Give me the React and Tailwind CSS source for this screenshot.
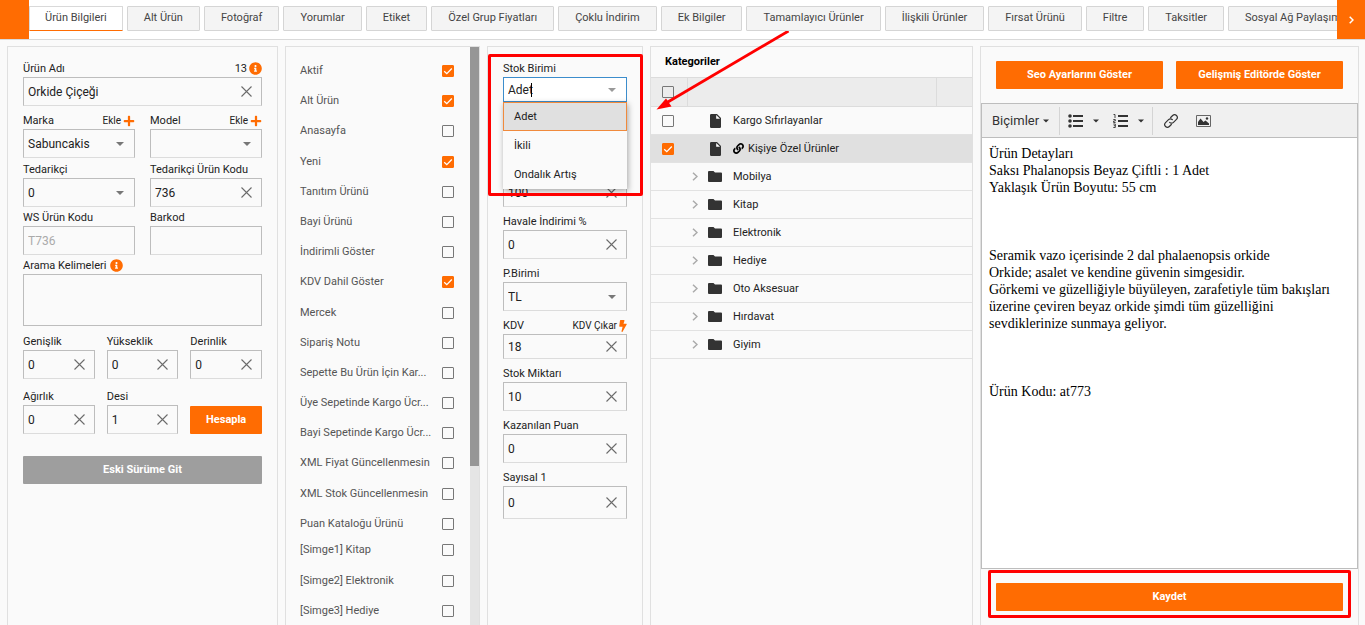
import { FaInfoCircle, FaPlus, FaLink, FaBolt } from "react-icons/fa";

const tabs = [
  "Ürün Bilgileri",
  "Alt Ürün",
  "Fotoğraf",
  "Yorumlar",
  "Etiket",
  "Özel Grup Fiyatları",
  "Çoklu İndirim",
  "Ek Bilgiler",
  "Tamamlayıcı Ürünler",
  "İlişkili Ürünler",
  "Fırsat Ürünü",
  "Filtre",
  "Taksitler",
  "Sosyal Ağ Paylaşım",
];

const productFlags = [
  { label: "Aktif", checked: true },
  { label: "Alt Ürün", checked: true },
  { label: "Anasayfa" },
  { label: "Yeni", checked: true },
  { label: "Tanıtım Ürünü" },
  { label: "Bayi Ürünü" },
  { label: "İndirimli Göster" },
  { label: "KDV Dahil Göster", checked: true },
  { label: "Mercek" },
  { label: "Sipariş Notu" },
  { label: "Sepette Bu Ürün İçin Kar..." },
  { label: "Üye Sepetinde Kargo Ücr..." },
  { label: "Bayi Sepetinde Kargo Ücr..." },
  { label: "XML Fiyat Güncellenmesin" },
  { label: "XML Stok Güncellenmesin" },
  { label: "Puan Kataloğu Ürünü" },
];

const iconFlags = [
  { label: "[Simge1] Kitap" },
  { label: "[Simge2] Elektronik" },
  { label: "[Simge3] Hediye" },
];

const categories = [
  { name: "Kargo Sıfırlayanlar", type: "file" },
  { name: "Kişiye Özel Ürünler", type: "file", checked: true, linked: true },
  { name: "Mobilya", type: "folder" },
  { name: "Kitap", type: "folder" },
  { name: "Elektronik", type: "folder" },
  { name: "Hediye", type: "folder" },
  { name: "Oto Aksesuar", type: "folder" },
  { name: "Hırdavat", type: "folder" },
  { name: "Giyim", type: "folder" },
];

const stockUnits = ["Adet", "İkili", "Ondalık Artış"];

function ClearIcon() {
  return (
    <svg width="11" height="11" viewBox="0 0 11 11" fill="none" stroke="#6b6b6b" strokeWidth="1.1">
      <path d="M0.5 0.5l10 10M10.5 0.5l-10 10" />
    </svg>
  );
}

function Caret({ className }) {
  return (
    <svg width="8" height="4" viewBox="0 0 8 4" className={className}>
      <path d="M0 0h8L4 4z" fill="currentColor" />
    </svg>
  );
}

function Checkbox({ id, checked, label }) {
  return (
    <span className="relative block size-3 shrink-0">
      <input
        id={id}
        type="checkbox"
        defaultChecked={checked}
        aria-label={label}
        className="peer block size-3 appearance-none rounded-[1px] border border-[#777] checked:border-[#ff6c02] checked:bg-[#ff6c02]"
      />
      <svg
        viewBox="0 0 12 12"
        className="pointer-events-none absolute inset-0 hidden size-3 peer-checked:block"
        fill="none"
        stroke="#fff"
        strokeWidth="1.3"
      >
        <path d="M2.2 6.2l2.6 2.5 5-5.2" />
      </svg>
    </span>
  );
}

// label row + control
function Field({ id, label, action, children, className = "" }) {
  return (
    <div className={className}>
      <div className="flex h-[17px] items-center justify-between text-[11px] leading-4 text-[#222]">
        <label htmlFor={id} className="whitespace-nowrap">{label}</label>
        {action}
      </div>
      {children}
    </div>
  );
}

function TextBox({ id, value, clearable = true, disabled, height = "h-[29px]", label }) {
  return (
    <div className={`relative ${height}`}>
      <input
        id={id}
        type="text"
        defaultValue={value}
        disabled={disabled}
        aria-label={label}
        className="block h-full w-full border border-[#bdbdbd] border-b-[#dcdcdc] bg-transparent pl-1 text-xs text-[#222] outline-none disabled:text-[#aaa]"
      />
      {clearable && (
        <button type="button" aria-label="Temizle" className="absolute inset-y-0 right-0 flex w-[31px] items-center justify-center">
          <ClearIcon />
        </button>
      )}
    </div>
  );
}

function SelectBox({ id, value }) {
  return (
    <div className="relative h-[29px]">
      <select
        id={id}
        defaultValue={value}
        className="block h-full w-full appearance-none border border-[#bdbdbd] border-b-[#dcdcdc] bg-transparent pl-1 text-xs text-[#222] outline-none"
      >
        <option value={value}>{value}</option>
      </select>
      <div className="pointer-events-none absolute inset-y-0 right-0 flex w-[31px] items-center justify-center text-[#777]">
        <Caret />
      </div>
    </div>
  );
}

function AddLink() {
  return (
    <a href="#ekle" className="flex items-center gap-0.5 text-[10px]">
      Ekle
      <FaPlus className="size-3 text-[#ff6c02]" />
    </a>
  );
}

function OrangeButton({ children, className = "" }) {
  return (
    <button type="button" className={`h-7 rounded-[1px] bg-[#ff6c02] text-[11px] font-bold text-white ${className}`}>
      {children}
    </button>
  );
}

function FlagList({ items, prefix, className }) {
  return (
    <div className={`flex flex-col justify-between ${className}`}>
      {items.map((item, index) => (
        <div key={index} className="flex h-4 items-center justify-between">
          <label htmlFor={`${prefix}-${index}`} className="whitespace-nowrap text-[11px] leading-[14px] text-[#555]">
            {item.label}
          </label>
          <Checkbox id={`${prefix}-${index}`} checked={item.checked} />
        </div>
      ))}
    </div>
  );
}

function TabBar() {
  return (
    <nav className="flex h-10 border-b border-[#d9d9d9] bg-white">
      <div className="w-[29px] shrink-0 bg-[#ff6c02]"></div>
      <div className="flex min-w-0 flex-1 gap-1 overflow-hidden pt-1.5">
        {tabs.map((tab, index) => (
          <button
            key={tab}
            type="button"
            className={`h-[25px] shrink-0 whitespace-nowrap rounded-[1px] border text-[11px] text-[#444] ${
              index === 0
                ? "border-[#d9d9d9] border-b-[#ff6c02] bg-white px-[15px]"
                : "border-[#d5d5d5] bg-[#f4f4f4] px-4"
            }`}
          >
            {tab}
          </button>
        ))}
      </div>
      <button type="button" aria-label="Sonraki" className="flex w-7 shrink-0 items-center justify-center bg-[#ff6c02]">
        <svg width="5" height="8" viewBox="0 0 5 8" fill="none" stroke="#fff" strokeWidth="1.5">
          <path d="M0.7 0.7L4 4L0.7 7.3" />
        </svg>
      </button>
    </nav>
  );
}

function GeneralPanel() {
  return (
    <section className="border border-b-0 border-[#e0e0e0] px-[15px] pt-[13px]">
      <Field
        id="name"
        label="Ürün Adı"
        action={
          <span className="flex items-center gap-0.5">
            13
            <FaInfoCircle className="size-[13px] text-[#ff6c02]" />
          </span>
        }
      >
        <TextBox id="name" value="Orkide Çiçeği" />
      </Field>

      <div className="mt-1.5 grid grid-cols-2 gap-x-[15px]">
        <Field id="brand" label="Marka" action={<AddLink />}>
          <SelectBox id="brand" value="Sabuncakis" />
        </Field>
        <Field id="model" label="Model" action={<AddLink />}>
          <SelectBox id="model" value="" />
        </Field>
      </div>

      <div className="mt-[3px] grid grid-cols-2 gap-x-[15px]">
        <Field id="supplier" label="Tedarikçi">
          <SelectBox id="supplier" value="0" />
        </Field>
        <Field id="supplierCode" label="Tedarikçi Ürün Kodu">
          <TextBox id="supplierCode" value="736" />
        </Field>
      </div>

      <div className="mt-0.5 grid grid-cols-2 gap-x-[15px]">
        <Field id="wsCode" label="WS Ürün Kodu">
          <TextBox id="wsCode" value="T736" clearable={false} disabled />
        </Field>
        <Field id="barcode" label="Barkod">
          <TextBox id="barcode" value="" clearable={false} />
        </Field>
      </div>

      <div className="mt-0.5">
        <div className="flex h-[17px] items-center gap-1 text-[11px] leading-4 text-[#222]">
          <label htmlFor="keywords">Arama Kelimeleri</label>
          <FaInfoCircle className="size-[13px] text-[#ff6c02]" />
        </div>
        <textarea id="keywords" className="block h-[52px] w-full resize-none border border-[#bdbdbd] bg-transparent outline-none"></textarea>
      </div>

      <div className="mt-[7px] grid grid-cols-3 gap-x-3 gap-y-[9px]">
        <Field id="width" label="Genişlik">
          <TextBox id="width" value="0" />
        </Field>
        <Field id="height" label="Yükseklik">
          <TextBox id="height" value="0" />
        </Field>
        <Field id="depth" label="Derinlik">
          <TextBox id="depth" value="0" />
        </Field>
        <Field id="weight" label="Ağırlık">
          <TextBox id="weight" value="0" />
        </Field>
        <Field id="desi" label="Desi">
          <TextBox id="desi" value="1" />
        </Field>
        <div className="flex items-end">
          <OrangeButton className="w-full">Hesapla</OrangeButton>
        </div>
      </div>

      <button type="button" className="mt-[22px] h-7 w-full rounded-[1px] bg-[#9e9e9e] text-[11px] font-bold text-white">
        Eski Sürüme Git
      </button>
    </section>
  );
}

function FlagsPanel() {
  return (
    <section className="flex border border-b-0 border-[#e0e0e0]">
      <div className="min-w-0 flex-1 pl-3.5 pr-4 pt-4">
        <FlagList items={productFlags} prefix="flag" className="h-[469px]" />
        <FlagList items={iconFlags} prefix="icon" className="mt-2.5 h-[77px]" />
      </div>
      {/* scrollbar */}
      <div className="w-[9px] bg-[#e5e5e5]">
        <div className="h-[419px] bg-[#969696]"></div>
      </div>
    </section>
  );
}

function StockPanel() {
  return (
    <section className="relative border border-b-0 border-[#e0e0e0] px-[15px] pt-[13px]">
      <Field id="stockUnit" label="Stok Birimi">
        <div className="relative h-[25px]">
          <input
            id="stockUnit"
            type="text"
            role="combobox"
            aria-expanded="true"
            aria-controls="stockUnitList"
            defaultValue="Adet"
            className="block h-full w-full border border-[#3c8dcc] bg-white pl-1 text-xs text-[#222] outline-none"
          />
          <span className="absolute left-7 top-1.5 h-3.5 w-px bg-black"></span>
          <div className="pointer-events-none absolute inset-y-0 right-0 flex w-[31px] items-center justify-center text-[#999]">
            <Caret />
          </div>
          <ul
            id="stockUnitList"
            role="listbox"
            className="absolute left-0 top-full z-10 w-full bg-[#fafafa] shadow-[1px_2px_6px_rgba(0,0,0,0.35)]"
          >
            {stockUnits.map((unit, index) => (
              <li
                key={unit}
                role="option"
                aria-selected={index === 0}
                className={`flex h-[29px] items-center border px-2.5 pt-0.5 text-[11px] text-[#222] ${
                  index === 0 ? "border-[#f08a3c] bg-[#e0e0e0]" : "border-transparent"
                }`}
              >
                {unit}
              </li>
            ))}
          </ul>
        </div>
      </Field>

      <div className="mt-[76px] flex flex-col gap-1.5">
        <TextBox id="limit" value="100" label="Limit" />
        <Field id="transferDiscount" label="Havale İndirimi %">
          <TextBox id="transferDiscount" value="0" />
        </Field>
        <Field id="currency" label="P.Birimi">
          <SelectBox id="currency" value="TL" />
        </Field>
        <Field
          id="vat"
          label="KDV"
          action={
            <a href="#kdv" className="flex items-center gap-0.5 text-[10px]">
              KDV Çıkar
              <FaBolt className="h-3 w-2 text-[#ff6c02]" />
            </a>
          }
        >
          <TextBox id="vat" value="18" height="h-[25px]" />
        </Field>
        <Field id="stock" label="Stok Miktarı">
          <TextBox id="stock" value="10" />
        </Field>
        <Field id="points" label="Kazanılan Puan">
          <TextBox id="points" value="0" />
        </Field>
        <Field id="numeric1" label="Sayısal 1">
          <TextBox id="numeric1" value="0" height="h-[33px]" />
        </Field>
      </div>

      <div className="pointer-events-none absolute -right-px left-0 top-[7px] z-20 h-[142px] rounded-[2px] border-3 border-[#ff0000]"></div>
      <svg width="134" height="82" viewBox="0 0 134 82" className="pointer-events-none absolute -top-4 left-[168px] z-20">
        <path d="M132.5 0L11 71.500" stroke="#ff0000" strokeWidth="2.8" fill="none" />
        <path d="M0.500 78.500L10 67.500L15.500 75.500z" fill="#ff0000" />
      </svg>
    </section>
  );
}

function CategoryIcon({ type }) {
  if (type === "file") {
    return (
      <svg width="11" height="14" viewBox="0 0 11 14">
        <path d="M1.200 0H7l4 4v8.800a1.200 1.200 0 0 1-1.200 1.200H1.200A1.200 1.200 0 0 1 0 12.800V1.200A1.200 1.200 0 0 1 1.200 0z" fill="#333" />
        <path d="M6.200 1v3.800H10z" fill="#fff" />
      </svg>
    );
  }
  return (
    <svg width="14" height="11" viewBox="0 0 14 11">
      <path d="M1 0h4.500L7 1.500h6a1 1 0 0 1 1 1V10a1 1 0 0 1-1 1H1a1 1 0 0 1-1-1V1a1 1 0 0 1 1-1z" fill="#333" />
    </svg>
  );
}

function CategoriesPanel() {
  return (
    <section className="border border-b-0 border-[#e0e0e0]">
      <h2 className="h-[30px] pl-3.5 pt-[7px] text-[11px] font-bold leading-4 text-black">Kategoriler</h2>
      <table className="w-full table-fixed border-collapse text-[11px] text-[#222]">
        <thead>
          <tr className="h-[29px] border-y border-[#dcdcdc] bg-[#ececec]">
            <th className="w-9 border-r border-[#dcdcdc] p-0 pl-[11px]">
              <Checkbox label="Tümünü seç" />
            </th>
            <th className="border-r border-[#dcdcdc] p-0"></th>
            <th className="w-9 p-0"></th>
          </tr>
        </thead>
        <tbody>
          {categories.map((category) => (
            <tr key={category.name} className={`h-7 border-b border-[#e2e2e2] ${category.checked ? "bg-[#e0e0e0]" : ""}`}>
              <td className="p-0 pl-[11px]">
                {category.type === "file" && <Checkbox checked={category.checked} label={category.name} />}
              </td>
              <td colSpan="2" className="p-0">
                <div className="flex items-center pl-[5px]">
                  <span className="w-4">
                    {category.type === "folder" && (
                      <svg width="6" height="9" viewBox="0 0 6 9" fill="none" stroke="#aaa" strokeWidth="1.5">
                        <path d="M1 0.7l4 3.800l-4 3.800" />
                      </svg>
                    )}
                  </span>
                  <span className="flex w-[14px] justify-center">
                    <CategoryIcon type={category.type} />
                  </span>
                  <span className="ml-[11px] flex items-center gap-1 leading-4">
                    {category.linked && <FaLink className="size-[11px] text-black" />}
                    {category.name}
                  </span>
                </div>
              </td>
            </tr>
          ))}
        </tbody>
      </table>
    </section>
  );
}

function EditorToolbar() {
  return (
    <div className="flex h-[34px] items-center border-b border-[#bdbdbd] bg-[#f0f0f0] text-[#333]">
      <button type="button" className="flex items-center gap-1 pl-2.5 pr-2.5 text-[13px]">
        Biçimler
        <Caret className="w-1.5" />
      </button>
      <span className="h-7 w-px bg-[#d4d4d4]"></span>
      <button type="button" aria-label="Madde listesi" className="flex items-center gap-2.5 pl-2">
        <svg width="15" height="14" viewBox="0 0 15 14" fill="currentColor">
          <circle cx="2" cy="2" r="1.800" />
          <circle cx="2" cy="7" r="1.800" />
          <circle cx="2" cy="12" r="1.800" />
          <path d="M5 1h10v2H5zM5 6h10v2H5zM5 11h10v2H5z" />
        </svg>
        <Caret className="w-1.5" />
      </button>
      <button type="button" aria-label="Numaralı liste" className="flex items-center gap-2.5 pl-3.5 pr-2">
        <svg width="15" height="14" viewBox="0 0 15 14" fill="currentColor">
          <path d="M5 1h10v2H5zM5 6h10v2H5zM5 11h10v2H5z" />
          <path d="M0.500 0.500h1.500v3.500M0.300 5.500h2v1.500h-1.700v1.500h2M0.300 10h2v3.500h-2M0.800 11.700h1.500" fill="none" stroke="currentColor" strokeWidth="0.9" />
        </svg>
        <Caret className="w-1.5" />
      </button>
      <span className="h-7 w-px bg-[#d4d4d4]"></span>
      <button type="button" aria-label="Bağlantı" className="pl-2.5">
        <svg width="16" height="16" viewBox="0 0 24 24" fill="none" stroke="currentColor" strokeWidth="1.8" strokeLinecap="round">
          <path d="M10 14a4 4 0 0 0 5.700 0l4.500-4.500a4 4 0 0 0-5.700-5.700l-3 3" />
          <path d="M14 10a4 4 0 0 0-5.700 0l-4.500 4.500a4 4 0 0 0 5.700 5.700l3-3" />
        </svg>
      </button>
      <button type="button" aria-label="Görsel" className="pl-[17px]">
        <svg width="15" height="12" viewBox="0 0 15 12">
          <path d="M0.500 0.500h14v11h-14z" fill="none" stroke="#666" />
          <path d="M2 10V7l2.500-3.500L7.500 7l2-1.500L13 8.500V10z" fill="#333" />
          <circle cx="11" cy="3.500" r="1.200" fill="#333" />
        </svg>
      </button>
    </div>
  );
}

function EditorPanel() {
  return (
    <section className="flex flex-col border border-b-0 border-[#e0e0e0]">
      <div className="grid grid-cols-2 gap-[13px] px-[15px] pb-3.5 pt-3.5">
        <OrangeButton>Seo Ayarlarını Göster</OrangeButton>
        <OrangeButton>Gelişmiş Editörde Göster</OrangeButton>
      </div>
      <div className="flex flex-1 flex-col border border-[#bdbdbd] bg-white">
        <EditorToolbar />
        <div className="flex-1 px-[7px] pt-[7px] font-['Liberation_Serif',serif] text-[14px] leading-[17px] text-black">
          <p>Ürün Detayları</p>
          <p>Saksı Phalanopsis Beyaz Çiftli : 1 Adet</p>
          <p>Yaklaşık Ürün Boyutu: 55 cm</p>
          <p className="mt-[51px]">Seramik vazo içerisinde 2 dal phalaenopsis orkide</p>
          <p>Orkide; asalet ve kendine güvenin simgesidir.</p>
          <p>
            Görkemi ve güzelliğiyle büyüleyen, zarafetiyle tüm bakışları
            <br />
            üzerine çeviren beyaz orkide şimdi tüm güzelliğini
            <br />
            sevdiklerinize sunmaya geliyor.
          </p>
          <p className="mt-[51px]">Ürün Kodu: at773</p>
        </div>
      </div>
      <div className="relative px-[15px] py-3.5">
        <OrangeButton className="block w-full">Kaydet</OrangeButton>
        <div className="pointer-events-none absolute inset-x-[7px] top-px h-12 rounded-[2px] border-3 border-[#ff0000]"></div>
      </div>
    </section>
  );
}

export default function App() {
  return (
    <div className="flex min-h-screen flex-col bg-[#fafafa] font-[Roboto,sans-serif]">
      <TabBar />
      <main className="mt-1.5 grid flex-1 grid-cols-[271fr_195fr_156fr_323fr_379fr] gap-[7px] pl-[7px] pr-1.5">
        <GeneralPanel />
        <FlagsPanel />
        <StockPanel />
        <CategoriesPanel />
        <EditorPanel />
      </main>
    </div>
  );
}
